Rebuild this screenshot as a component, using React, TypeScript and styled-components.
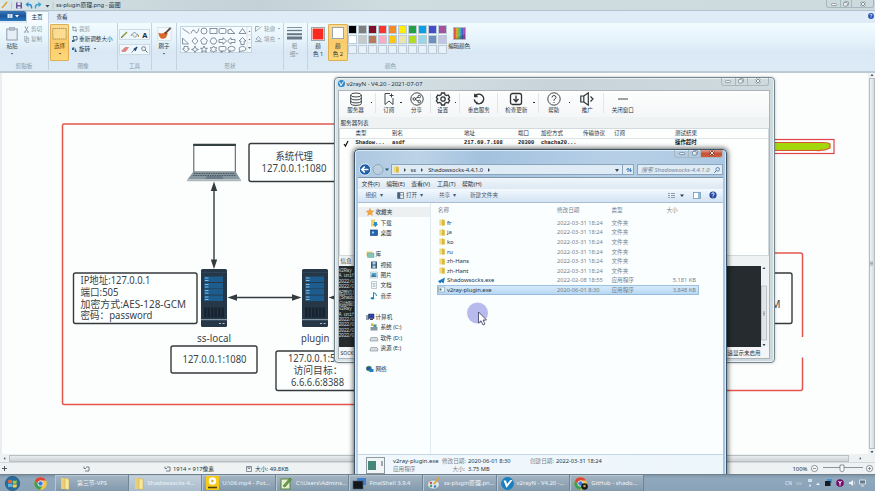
import React from "react";
import styled, { createGlobalStyle } from "styled-components";

const Global = createGlobalStyle`
  * { box-sizing: border-box; }
  html, body { margin: 0; padding: 0; overflow: hidden; }
  body { font-family: "Noto Sans", "Noto Sans CJK SC", sans-serif; font-size: 5.6px; color: #26323c; }
  svg { display: block; flex: none; overflow: visible; }
`;

const Desktop = styled.div`
  position: relative;
  width: 875px;
  height: 491px;
  overflow: hidden;
  display: flex;
  flex-direction: column;
  background: #fcfefe;
`;

const Txt = styled.span<{ $s?: number; $c?: string; $ls?: number; $b?: boolean; $i?: boolean }>`
  display: block;
  flex: none;
  white-space: pre;
  font-size: ${(p) => p.$s ?? 5.6}px;
  line-height: 8px;
  color: ${(p) => p.$c ?? "#26323c"};
  letter-spacing: ${(p) => p.$ls ?? 0}px;
  font-weight: ${(p) => (p.$b ? 700 : 400)};
  font-style: ${(p) => (p.$i ? "italic" : "normal")};
`;

const Row = styled.div<{ $gap?: number; $h?: number; $pl?: number }>`
  display: flex;
  align-items: center;
  gap: ${(p) => p.$gap ?? 0}px;
  height: ${(p) => (p.$h ? p.$h + "px" : "auto")};
  padding-left: ${(p) => p.$pl ?? 0}px;
`;

/* ---------- window caption buttons ---------- */
const CaptionBox = styled.div<{ $w: number[] }>`
  display: grid;
  grid-template-columns: ${(p) => p.$w.map((w) => w + "px").join(" ")};
  height: 8px;
  border: 1px solid #a9b8c0;
  border-top: 0;
  border-radius: 0 0 3px 3px;
  overflow: hidden;
`;
const CaptionBtn = styled.div<{ $red?: boolean }>`
  display: flex;
  align-items: center;
  justify-content: center;
  border-left: 1px solid #a9b8c0;
  background: ${(p) => (p.$red ? "linear-gradient(#e0a193, #c7513a 50%, #cf5c3c)" : "transparent")};
  &:first-child { border-left: 0; }
`;
function Caption({ w, red }: { w: number[]; red?: boolean }) {
  const s = red ? "#5d7385" : "#75838b";
  return (
    <CaptionBox $w={w}>
      <CaptionBtn>
        <svg width="6" height="6" viewBox="0 0 6 6"><rect x=".5" y="2.6" width="5" height="2" rx=".8" fill="#f2f6f8" stroke={s} strokeWidth=".7" /></svg>
      </CaptionBtn>
      <CaptionBtn>
        <svg width="6" height="6" viewBox="0 0 6 6"><rect x="1.5" y=".6" width="4" height="3.6" rx=".6" fill="#eef3f5" stroke={s} strokeWidth=".7" /><rect x=".5" y="1.6" width="3.8" height="3.4" rx=".6" fill="#eef3f5" stroke={s} strokeWidth=".7" /></svg>
      </CaptionBtn>
      <CaptionBtn $red={red}>
        <svg width="6" height="6" viewBox="0 0 6 6"><path d="M1 1l4 4M5 1L1 5" stroke={red ? "#7a3a2c" : s} strokeWidth="2" /><path d="M1.2 1.2l3.6 3.6M4.8 1.2L1.2 4.8" stroke="#fff" strokeWidth=".9" /></svg>
      </CaptionBtn>
    </CaptionBox>
  );
}

/* ---------- Paint ---------- */
const PaintTitle = styled.div`
  height: 11px;
  display: flex;
  align-items: center;
  justify-content: space-between;
  background: linear-gradient(90deg, #d9e6ea 0, #cfdde1 80px, #c4d2d8 260px, #cfdce0 400px, #ccd9dd);
  border-bottom: 1px solid #b1c2ca;
`;
const CaptionSlot = styled.div`
  align-self: flex-start;
  padding-right: 1px;
`;
const TabBar = styled.div`
  height: 12px;
  display: flex;
  background: #dfebf6;
`;
const FileTab = styled.div`
  width: 25.5px;
  height: 10px;
  display: flex;
  align-items: center;
  justify-content: center;
  background: linear-gradient(#3c78b8, #1a559c 50%, #2c79be);
  border-radius: 0 2px 0 0;
`;
const Tab = styled.div<{ $on?: boolean }>`
  width: ${(p) => (p.$on ? 23 : 27)}px;
  height: 12px;
  padding-bottom: ${(p) => (p.$on ? 2 : 1)}px;
  display: flex;
  align-items: center;
  justify-content: center;
  background: ${(p) => (p.$on ? "#f6fcff" : "transparent")};
  border: ${(p) => (p.$on ? "1px solid #c4d5e4" : "0")};
  border-bottom: 0;
`;
const HelpSlot = styled.div`
  margin-left: auto;
  padding: 2px 1px;
`;
const Ribbon = styled.div`
  height: 50px;
  display: flex;
  background: linear-gradient(#f2fcff 0, #e6f3fb 35%, #d9e8f4 60%, #dcebf6);
  border-bottom: 2px solid #bccad3;
`;
const Group = styled.div<{ $w: number }>`
  width: ${(p) => p.$w}px;
  height: 47px;
  flex: none;
  display: flex;
  flex-direction: column;
  border-right: 1px solid #c3d4e0;
  &:last-child { border-right: 0; }
`;
const GroupBody = styled.div`
  height: 38.500px;
  display: flex;
  align-items: flex-start;
`;
const GroupLabel = styled.div`
  height: 8px;
  display: flex;
  justify-content: center;
`;
const BigButton = styled.div<{ $w: number; $ml?: number; $on?: boolean }>`
  width: ${(p) => p.$w}px;
  height: 37px;
  margin: 1px 0 0 ${(p) => p.$ml ?? 0}px;
  display: flex;
  flex-direction: column;
  align-items: center;
  padding-top: 2px;
  border-radius: 1px;
  border: ${(p) => (p.$on ? "1px solid #dfae51" : "1px solid transparent")};
  background: ${(p) => (p.$on ? "linear-gradient(#fadb97, #fbcb69 50%, #fed778)" : "transparent")};
`;
const BigIcon = styled.div`
  height: 15px;
  display: flex;
  align-items: flex-start;
`;
const SmallCol = styled.div<{ $ml: number }>`
  margin: 1px 0 0 ${(p) => p.$ml}px;
  display: flex;
  flex-direction: column;
`;
const ToolBoxes = styled.div`
  margin: 6px 0 0 1px;
  display: flex;
  flex-direction: column;
  gap: 4px;
`;
const ToolBox = styled.div`
  width: 31px;
  height: 11px;
  display: flex;
  align-items: center;
  justify-content: space-around;
  background: #eef7fc;
  border: 1px solid #ccdae4;
`;
const ShapeBox = styled.div`
  width: 72px;
  height: 27px;
  margin: 3px 0 0 3px;
  display: flex;
  background: #f5fbfe;
  border: 1px solid #c3d4df;
`;
const Swatch = styled.div<{ $c: string; $s: number }>`
  width: ${(p) => p.$s}px;
  height: ${(p) => p.$s}px;
  background: ${(p) => p.$c};
  border: 1px solid #9aa5ac;
  box-shadow: inset 0 0 0 0.6px #fff;
`;
const Palette = styled.div`
  margin: 1.5px 0 0 0.5px;
  display: grid;
  grid-template-columns: repeat(10, 9px);
  grid-auto-rows: 9px;
  gap: 1px;
`;
const PaletteCell = styled.div<{ $c: string }>`
  background: ${(p) => p.$c};
  border: 1px solid #bccbd6;
`;

const Clip = () => (
  <svg width="12" height="14" viewBox="0 0 12 14"><rect x=".8" y="2" width="10.4" height="11" fill="#e6edf5" stroke="#8d9cae" /><rect x="3.5" y=".6" width="5" height="2.6" fill="#b4bfca" stroke="#8d9cae" strokeWidth=".6" /></svg>
);
const MenuMark = ({ c = "#44515d" }: { c?: string }) => (
  <svg width="4" height="8" viewBox="0 0 4 8"><path d="M.8 3h2.400L2 4.600z" fill={c} /></svg>
);
function Shapes() {
  return (
    <svg width="66" height="25" viewBox="0 0 66 25" fill="none" stroke="#56697a" strokeWidth=".7">
      <path d="M1.500 1.500l7 5M10 6.500q2-6 4-2t4-3M1.500 11v6h6zM14 10.500l3 3.500-3 3.500-3-3.500zM23 10.500l3.300 2.600-1.300 4h-4l-1.300-4zM47 6.500V3l3-1 1 2 3 2.500zM58 6.500l3.500-5 3.500 5z" />
      <circle cx="23" cy="4" r="3" />
      <rect x="29" y="1.500" width="7" height="5" /><rect x="38" y="1.500" width="7" height="5" rx="1.300" />
      <path d="M31 11h3l2 3-2 3h-3l-2-3zM38 12.500h4v-1.800l3.500 3.300-3.500 3.300v-1.800h-4zM54 12.500h-4v-1.800L46.500 14l3.500 3.300v-1.800h4zM59.800 17.500V14H58l3.500-3.500L65 14h-1.800v3.500z" />
      <path d="M3 19.500h4v2.500h1.500L5 25.200 1.500 22H3zM14 19l1 2.500 2.500 1L15 23.500l-1 2-1-2-2.500-1 2.500-1zM23 19l1 2.300h2.500l-1.900 1.500.8 2.400-2.400-1.400-2.400 1.400.8-2.400-1.900-1.500H22zM32.500 19l1 1.700h2.200l-1 1.700 1 1.700h-2.200l-1 1.300-1-1.300h-2.200l1-1.700-1-1.700h2.200z" />
      <rect x="38" y="19.500" width="7" height="4.500" rx="1.200" /><path d="M40 24v1.500l2-1.500" />
      <ellipse cx="50.500" cy="21.800" rx="3.600" ry="2.400" /><path d="M48 23.500v2l2-1.500M58.500 23.500q-1.500-3 1-3.500 2-1.500 4 0 2 .5 1 3-1 1.500-4.500 1l-2 1z" />
    </svg>
  );
}
const palette = [
  "#000", "#7f7f7f", "#83102a", "#f8362e", "#f58a2a", "#fdec0a", "#22a048", "#0aa0e4", "#444cc8", "#a3509f",
  "#fff", "#c5c9ca", "#b9795a", "#fcaac6", "#fcc813", "#ece6ae", "#b4dc1e", "#96d8e8", "#6e90ba", "#c6c2e4",
  ...Array(10).fill("#e6f1f9"),
];

function PaintRibbon() {
  const g = "#8c9aa6";
  return (
    <Ribbon>
      <Group $w={49}>
        <GroupBody>
          <BigButton $w={22} $ml={1}><BigIcon><Clip /></BigIcon><Txt $c="#44515d">粘贴</Txt><MenuMark /></BigButton>
          <SmallCol $ml={1}>
            <Row $gap={2} $h={10}><svg width="5" height="7" viewBox="0 0 5 7"><path d="M1 .5l2.600 5M4 .5L1.500 5.500" stroke={g} /><circle cx="1" cy="6" r=".8" fill="none" stroke={g} strokeWidth=".6" /><circle cx="4" cy="6" r=".8" fill="none" stroke={g} strokeWidth=".6" /></svg><Txt $c={g}>剪切</Txt></Row>
            <Row $gap={2} $h={10}><svg width="5" height="7" viewBox="0 0 5 7" fill="#edf3f7" stroke={g} strokeWidth=".6"><path d="M.5.500h2.500v4.500h-2.500zM2 2h2.700v4.500h-2.700z" /></svg><Txt $c={g}>复制</Txt></Row>
          </SmallCol>
        </GroupBody>
        <GroupLabel><Txt $c={g}>剪贴板</Txt></GroupLabel>
      </Group>
      <Group $w={69}>
        <GroupBody>
          <BigButton $w={19} $ml={1} $on>
            <BigIcon><svg width="15" height="14" viewBox="0 0 15 14"><rect x=".8" y="1.500" width="13.400" height="10.500" fill="#fbdc93" stroke="#a9863f" strokeWidth=".8" strokeDasharray="1.500 .5" /></svg></BigIcon>
            <Txt $c="#6c531c">选择</Txt><MenuMark />
          </BigButton>
          <SmallCol $ml={2.500}>
            <Row $gap={2.500} $h={10}><svg width="5" height="6" viewBox="0 0 5 6"><path d="M1 0v4.500h4M0 1.500h4V6" stroke={g} fill="none" strokeWidth=".8" /></svg><Txt $c={g}>裁剪</Txt></Row>
            <Row $gap={2.500} $h={10}><svg width="5" height="6" viewBox="0 0 5 6"><path d="M1 .5h4v3.500H2z" fill="#e9f6ff" stroke="#33526f" strokeWidth=".8" /><path d="M0 4h2.500v2H0z" fill="#3e6388" /></svg><Txt>重新调整大小</Txt></Row>
            <Row $gap={2.500} $h={10}><svg width="5" height="6" viewBox="0 0 5 6"><path d="M0 2L2 1v3H0zM2.700 1L5 6H2.700z" fill="#346795" /></svg><Txt>旋转</Txt><MenuMark /></Row>
          </SmallCol>
        </GroupBody>
        <GroupLabel><Txt $c={g}>图像</Txt></GroupLabel>
      </Group>
      <Group $w={34}>
        <GroupBody>
          <ToolBoxes>
            <ToolBox>
              <svg width="7" height="7" viewBox="0 0 7 7"><path d="M.7 6.300L6 1" stroke="#8f9f47" strokeWidth="1.600" /><path d="M.3 6.700l1-1" stroke="#333" /></svg>
              <svg width="8" height="7" viewBox="0 0 8 7"><path d="M3.500 1L6.500 4 4 6.500 1 3.500z" fill="#e9f0f5" stroke="#597994" strokeWidth=".7" /><path d="M1 3l-1 2M6 3q2 .5 1.500 3" stroke="#ce8749" fill="none" /></svg>
              <Txt $s={7.500} $b>A</Txt>
            </ToolBox>
            <ToolBox>
              <svg width="8" height="7" viewBox="0 0 8 7"><path d="M.5 5L4 1.500h3.500L4.500 5.500H1z" fill="#ea8480" stroke="#bb6663" strokeWidth=".5" /></svg>
              <svg width="7" height="7" viewBox="0 0 7 7"><path d="M.5 6.500l3-3" stroke="#889" /><path d="M3 2.500L5 4.500M4 3.500l2-2.500" stroke="#274d7d" strokeWidth="1.800" /></svg>
              <svg width="7" height="7" viewBox="0 0 7 7"><circle cx="2.700" cy="2.700" r="2" fill="#edf7fb" stroke="#596a78" strokeWidth=".8" /><path d="M4.300 4.300l2.200 2.200" stroke="#596a78" /></svg>
            </ToolBox>
          </ToolBoxes>
        </GroupBody>
        <GroupLabel><Txt $c={g}>工具</Txt></GroupLabel>
      </Group>
      <Group $w={25}>
        <GroupBody>
          <BigButton $w={24}>
            <BigIcon><svg width="15" height="15" viewBox="0 0 15 16"><rect x=".5" y=".5" width="14" height="14" fill="#f5fafc" stroke="#c6d0d6" strokeWidth=".6" /><path d="M1 6q1 9 8 5.500L11 7 8 5q-2 3-7 1z" fill="#d9692f" /><path d="M8 7l6-6" stroke="#544a44" strokeWidth="2" /></svg></BigIcon>
            <Txt>刷子</Txt><MenuMark />
          </BigButton>
        </GroupBody>
      </Group>
      <Group $w={107}>
        <GroupBody>
          <ShapeBox>
            <Shapes />
            <svg width="5" height="25" viewBox="0 0 5 25"><path d="M0 0v25M0 8h5M0 16h5" stroke="#c9d6df" strokeWidth=".6" /><path d="M1.500 5l1-1.200 1 1.200zM1.500 12l1 1.200 1-1.200zM1 20h3l-1.500 2z" fill="#56697a" /></svg>
          </ShapeBox>
          <SmallCol $ml={3}>
            <Row $gap={2} $h={10}><svg width="7" height="6" viewBox="0 0 7 6"><path d="M4 .5H.5v5L6.500.5" stroke={g} fill="none" strokeWidth=".8" /></svg><Txt $c={g}>轮廓</Txt><MenuMark c={g} /></Row>
            <Row $gap={2} $h={10}><svg width="7" height="6" viewBox="0 0 7 6"><path d="M1 3l2.500-2.500L6 3.500l-2 1.500zM0 5.600h7" stroke={g} fill="none" strokeWidth=".8" /></svg><Txt $c={g}>填充</Txt><MenuMark c={g} /></Row>
          </SmallCol>
        </GroupBody>
        <GroupLabel><Txt $c={g}>形状</Txt></GroupLabel>
      </Group>
      <Group $w={24}>
        <GroupBody>
          <BigButton $w={21}>
            <BigIcon><svg width="15" height="14" viewBox="0 0 15 14" stroke="#677784"><path d="M0 .5h15" strokeWidth=".8" /><path d="M0 3.500h15" strokeWidth="1.300" /><path d="M0 7.200h15" strokeWidth="2" /><path d="M0 11h15" strokeWidth="3" /></svg></BigIcon>
            <Txt $c={g}>粗</Txt><Row><Txt $c={g}>细</Txt><MenuMark c={g} /></Row>
          </BigButton>
        </GroupBody>
      </Group>
      <Group $w={165}>
        <GroupBody>
          <BigButton $w={20}><BigIcon><Swatch $c="#fb2a20" $s={14} /></BigIcon><Txt>颜</Txt><Txt>色 1</Txt></BigButton>
          <BigButton $w={19.500} $on><BigIcon><Swatch $c="#fff" $s={12} /></BigIcon><Txt>颜</Txt><Txt>色 2</Txt></BigButton>
          <Palette>{palette.map((c, i) => <PaletteCell key={i} $c={c} />)}</Palette>
          <BigButton $w={24}>
            <BigIcon><svg width="13" height="13" viewBox="0 0 13 13"><rect width="13" height="13" fill="#b1b9bd" />{["#d6574d", "#dda332", "#79bd4e", "#44a2bd", "#4c59c6", "#ad4cb2"].map((c, i) => <rect key={c} x={1 + i * 1.850} y="1" width="1.900" height="11" fill={c} />)}<path d="M1 12h11V7z" fill="#0003" /></svg></BigIcon>
            <Txt $ls={-0.200}>编辑颜色</Txt>
          </BigButton>
        </GroupBody>
        <GroupLabel><Txt $c={g}>颜色</Txt></GroupLabel>
      </Group>
    </Ribbon>
  );
}

const CanvasArea = styled.div`
  height: 381px;
  display: flex;
  overflow: hidden;
  border-left: 2px solid #e8eef1;
`;
const VScroll = styled.div`
  width: 7px;
  flex: none;
  display: flex;
  flex-direction: column;
  align-items: center;
  justify-content: space-between;
  background: #eef2f4;
`;
const VThumb = styled.div`
  width: 6px;
  flex: 1;
  margin: 1px 0;
  border: 1px solid #b3bcc1;
  background: linear-gradient(90deg, #f0f3f4, #d5dbde);
  display: flex;
  align-items: center;
  justify-content: center;
`;
const HScroll = styled.div`
  height: 8px;
  display: flex;
  align-items: center;
  padding: 0 13px 0 3px;
  gap: 3px;
  background: #eef1f2;
`;
const HThumb = styled.div`
  flex: 1;
  height: 7px;
  margin-right: 7px;
  border: 1px solid #babfc2;
  background: linear-gradient(#e9eced, #cfd4d6);
`;
const PaintStatus = styled.div`
  height: 12px;
  display: grid;
  grid-template-columns: 83px 81px 82px 1fr auto;
  align-items: center;
  padding-right: 2px;
  background: #eef2f3;
  border-top: 1px solid #d2d9dc;
`;
const Arrow = ({ d, w = 4 }: { d: string; w?: number }) => (
  <svg width={w} height={w} viewBox="0 0 4 4"><path d={d} fill="#3f4a52" /></svg>
);
const UP = "M2 1l1.500 2h-3z";
const DOWN = "M2 3.200L.5 1h3z";

function Server({ x }: { x: number }) {
  return (
    <g transform={`translate(${x} 269)`}>
      <rect width="26" height="58" rx="1.500" fill="#263847" />
      <rect y="50" width="26" height="1.200" fill="#8796a3" />
      <rect y="3" width="26" height=".8" fill="#31495d" />
      {[0, 6.500, 12.600, 19].map((y) => (
        <g key={y} transform={`translate(0 ${y})`}>
          <rect x="3" y="7.500" width="19" height="5.500" fill="#1d5c8e" />
          <path d="M4 9h3.500M4 11.500h3.500" stroke="#9cc6e2" strokeWidth=".9" />
        </g>
      ))}
      <path d="M3 38.500h20v10H3z" fill="#17232f" />
      <path d="M6 38.500v10M9.500 38.500v10M13 38.500v10M16.500 38.500v10M20 38.500v10" stroke="#2b4154" strokeWidth=".7" />
      <path d="M18 54.500h2M21.500 54.500h2" stroke="#b6c2ca" strokeWidth="1" />
    </g>
  );
}

const DiagramText = styled.text.attrs({ lengthAdjust: "spacingAndGlyphs" })`
  font-family: "Noto Sans", "Noto Sans CJK SC", sans-serif;
  font-size: 10.2px;
  fill: #3b4246;
  white-space: pre;
`;
function Diagram() {
  const arrow = "#333b3d";
  return (
    <svg width="866" height="381" viewBox="2 73 866 381">
      <g fill="none" stroke="#e2564e" strokeWidth="1.500">
        <path d="M400 124H64q-1.500 0-1.500 1.500V403q0 1.500 1.500 1.500H400" />
        <path d="M700 253h100.500q2 0 2 2v82M802.500 357.500V388.500q0 2-2 2H700" />
        <rect x="700" y="139.500" width="134" height="14" stroke="#e0434c" strokeWidth="1.200" />
      </g>
      <path d="M700 142.500H822q8 0 8 1.500v4q-6 3-14 2.500H700z" fill="#a4d60e" stroke="#dc5331" strokeWidth="1.200" />
      <g fill="#fdffff" stroke="#343a3c" strokeWidth="1.400">
        <rect x="249" y="143.500" width="130" height="38" rx="2" />
        <rect x="73.500" y="273" width="123.500" height="50.500" rx="2" />
        <rect x="171" y="346" width="86" height="27" rx="2" />
        <rect x="276" y="351" width="120" height="39.500" rx="2" />
        <rect x="680" y="273" width="112" height="50.500" rx="2" />
      </g>
      <DiagramText x="275.500" y="160.200" textLength="37.500">系统代理</DiagramText>
      <DiagramText x="261.500" y="171.800" textLength="65">127.0.0.1:1080</DiagramText>
      <DiagramText x="80.500" y="283.500" textLength="70">IP地址:127.0.0.1</DiagramText>
      <DiagramText x="80.500" y="295.500" textLength="38">端口:505</DiagramText>
      <DiagramText x="80.500" y="307.500" textLength="105.500">加密方式:AES-128-GCM</DiagramText>
      <DiagramText x="80.500" y="319.200" textLength="72">密码：password</DiagramText>
      <DiagramText x="197" y="342" textLength="34">ss-local</DiagramText>
      <DiagramText x="301" y="342" textLength="28.500">plugin</DiagramText>
      <DiagramText x="182.500" y="362.500" textLength="64">127.0.0.1:1080</DiagramText>
      <DiagramText x="288" y="362" textLength="58">127.0.0.1:505</DiagramText>
      <DiagramText x="293.500" y="373.700" textLength="49">访问目标：</DiagramText>
      <DiagramText x="291" y="386.200" textLength="53">6.6.6.6:8388</DiagramText>
      <DiagramText x="780.500" y="307.500" textAnchor="end">AES-128-GCM</DiagramText>
      <rect x="193.800" y="144.500" width="41.500" height="27.500" fill="#fdffff" stroke="#4b5757" strokeWidth="1" />
      <path d="M193.300 144.800h42.500" stroke="#33403f" strokeWidth="2.200" />
      <path d="M193 172h43l4.500 7.500h-53z" fill="#8797a0" />
      <path d="M194 173.500h41M193 175.500h43" stroke="#4a5763" strokeWidth="1.100" strokeDasharray="1.600 .8" />
      <path d="M207 176h15l1.500 3h-18z" fill="#6c7988" /><path d="M187 179.500h54v1.700h-54z" fill="#acb8ba" />
      <path d="M214 188v74M236 297.500h58M334 297.500h30" stroke={arrow} strokeWidth="1.400" />
      <path d="M214 181.500l3.200 9.500h-6.400zM214 269l3.200-9.500h-6.400zM227.500 297.500l9.500-3.200v6.400zM301.500 297.500l-9.500-3.200v6.400zM328.500 297.500l9.500-3.200v6.400z" fill={arrow} />
      <Server x={201} /><Server x={302} />
    </svg>
  );
}

/* ---------- Windows ---------- */
const V2Window = styled.div`
  position: absolute;
  left: 333.500px;
  top: 76.500px;
  width: 441px;
  height: 286.500px;
  padding: 0 4px 3px 3px;
  border: 1px solid #75848b;
  border-radius: 4px;
  background: linear-gradient(90deg, #d9e4e8, #c8d4da 50%, #cfdadf);
  box-shadow: inset 0 0 0 1px #edf3f5, 0 0 3px #0004;
  display: flex;
  flex-direction: column;
`;
const V2Title = styled.div`
  height: 12px;
  flex: none;
  display: flex;
  align-items: center;
  justify-content: space-between;
`;
const V2Body = styled.div`
  flex: 1;
  display: flex;
  flex-direction: column;
  background: #eff2f3;
  border: 1px solid #aab4b9;
`;
const V2Toolbar = styled.div`
  height: 26.500px;
  flex: none;
  display: flex;
  padding-left: 2px;
  background: linear-gradient(#fdfefe, #f4f6f7);
`;
const V2Tool = styled.div<{ $w: number }>`
  width: ${(p) => p.$w}px;
  flex: none;
  padding-top: 1px;
  display: flex;
  flex-direction: column;
  align-items: center;
`;
const V2Gap = styled.div<{ $w: number; $sep?: boolean }>`
  width: ${(p) => p.$w}px;
  flex: none;
  height: 22px;
  margin-top: 1px;
  display: flex;
  align-items: center;
  justify-content: center;
  &::before {
    content: "";
    width: ${(p) => (p.$sep ? 1 : 1.500)}px;
    height: ${(p) => (p.$sep ? 20 : 1.500)}px;
    background: ${(p) => (p.$sep ? "#e2e6e8" : "#333")};
  }
`;
const GroupTitle = styled.div<{ $h: number }>`
  height: ${(p) => p.$h}px;
  flex: none;
  padding-left: 2px;
  display: flex;
  align-items: center;
`;
const V2Grid = styled.div`
  flex: 1;
  background: #fdfefe;
  border: 1px solid #d3dadd;
`;
const V2GridRow = styled.div<{ $head?: boolean }>`
  height: ${(p) => (p.$head ? 9.500 : 9)}px;
  display: grid;
  grid-template-columns: 16px 36.500px 72px 54px 23px 42px 31px 61px 1fr;
  align-items: center;
  border-bottom: ${(p) => (p.$head ? "1px solid #dfe4e7" : "0")};
`;
const LogPane = styled.div`
  height: 81px;
  flex: none;
  display: flex;
  padding-right: 1px;
`;
const LogText = styled.div`
  flex: 1;
  padding-top: 3px;
  background: #252b2e;
  overflow: hidden;
`;
const LogLine = styled.div`
  height: 5.450px;
  font: 5px/5.450px "Liberation Mono", "Noto Sans CJK SC", monospace;
  letter-spacing: -0.400px;
  white-space: pre;
  color: #c6ccce;
`;
const V2Status = styled.div`
  height: 11px;
  flex: none;
  display: flex;
  align-items: center;
  justify-content: space-between;
  padding: 0 8px 0 2px;
  background: #f3f5f6;
`;
const Mono = styled(Txt)`
  font-family: "Liberation Mono", "Noto Sans CJK SC", monospace;
`;

const ico: Record<string, React.ReactNode> = {
  db: <><ellipse cx="7" cy="3" rx="5.300" ry="2" /><path d="M1.700 3v8.500c0 2.500 10.600 2.500 10.600 0V3M1.700 6c0 2.500 10.600 2.500 10.600 0M1.700 9c0 2.500 10.600 2.500 10.600 0" /></>,
  mark: <path d="M8 1.500H3v11l4-3.500 4 3.500V6M9.500 1.500v4M7.500 3.500h4" />,
  share: <><circle cx="7" cy="7" r="6.200" /><circle cx="4.300" cy="7" r="1.300" /><circle cx="9.300" cy="4.500" r="1.300" /><circle cx="9.300" cy="9.600" r="1.300" /><path d="M5.500 6.500l2.600-1.300M5.500 7.600l2.600 1.400" /></>,
  gear: <><path strokeWidth="1.300" d="M5.500 1h3l.5 1.800 1.500.8 1.700-.6 1.400 2.500L12.300 7l1.300 1.500-1.400 2.500-1.700-.6-1.500.8-.5 1.800h-3L5 11.200l-1.500-.8-1.700.6L.4 8.500 1.700 7 .4 5.500 1.800 3l1.700.6L5 2.800z" /><circle cx="7" cy="7" r="2.200" strokeWidth="1.300" /></>,
  restart: <path strokeWidth="1.500" d="M3.300 4A4.700 4.700 0 1 1 4.200 10.800M2.300 7.500a4.700 4.700 0 0 0 2.500 3.700M2.800 1.700V4.500H5.600M4.800 12.300V9.800" />,
  update: <><rect x="1.500" y="1.500" width="11" height="11" rx="2" strokeWidth="1.300" /><path strokeWidth="1.300" d="M7 3.500v6M4.500 7L7 9.700 9.500 7" /></>,
  help: <><circle cx="7" cy="7" r="6.200" /><path d="M5 5.500Q5 3.500 7 3.500t2 2Q9 6.700 7 7.600v1.200M7 10v1" /></>,
  horn: <path strokeWidth="1.200" d="M.8 4h3v6h-3zM3.800 4L8.300.8v12.400L3.800 10M10.500 4.500l2.500 2.500-2.500 2.500" />,
  line: <path d="M2 7h10" />,
};
const V2Icon = ({ n }: { n: string }) => (
  <svg width="14" height="14" viewBox="0 0 14 14" fill="none" stroke="#2e3335" strokeWidth=".9">{ico[n]}</svg>
);
type Piece = [number, string?, string?];
const tools: Piece[] = [
  [30, "db", "服务器"], [2], [6, "|"], [20.400, "mark", "订阅"], [4], [27.400, "share", "分享"], [1, "|"],
  [23.200, "gear", "设置"], [2], [7, "|"], [30.400, "restart", "重启服务"], [8, "|"], [28.600, "update", "检查更新"],
  [7], [3, "|"], [26.800, "help", "帮助"], [4], [32.200, "horn", "推广"], [1, "|"], [36.800, "line", "关闭窗口"],
];
const logs = ["V2Ray 4", "A unifi", "2022/04", "2022/04", "配置信息", "[Shadow", "启动服务", "V2Ray 4", "A unifi", "2022/04", "2022/04", "2022/04", "2022/04"];

function V2RayN() {
  return (
    <V2Window>
      <V2Title>
        <Row $gap={2}>
          <svg width="7" height="7" viewBox="0 0 7 7"><circle cx="3.500" cy="3.500" r="3.500" fill="#2b87c8" /><path d="M1.500 1.800L3 5.500l2.500-4" stroke="#fff" fill="none" /></svg>
          <Txt $s={6.100} $ls={-0.080}>v2rayN - V4.20 - 2021-07-07</Txt>
        </Row>
        <CaptionSlot><Caption w={[13, 12, 21]} /></CaptionSlot>
      </V2Title>
      <V2Body>
        <V2Toolbar>
          {tools.map(([w, n, label], i) => label
            ? <V2Tool key={i} $w={w}><V2Icon n={n!} /><Txt $s={5.500}>{label}</Txt></V2Tool>
            : <V2Gap key={i} $w={w} $sep={n === "|"} />)}
        </V2Toolbar>
        <GroupTitle $h={11}><Txt>服务器列表</Txt></GroupTitle>
        <V2Grid>
          <V2GridRow $head>
            <i />{["类型", "别名", "地址", "端口", "加密方式", "传输协议", "订阅", "测试结果"].map((t) => <Txt key={t} $s={5.500}>{t}</Txt>)}
          </V2GridRow>
          <V2GridRow>
            <svg width="10" height="7" viewBox="0 0 10 7"><path d="M4 4l1.500 2L8 1" fill="none" stroke="#111" strokeWidth="1.200" /></svg>
            {["Shadow...", "asdf", "217.69.7.108", "20300", "chacha20...", "", "", "操作超时"].map((t, i) => <Mono key={i} $s={5.400} $b $c="#111">{t}</Mono>)}
          </V2GridRow>
        </V2Grid>
        <GroupTitle $h={10}><Txt>信息</Txt></GroupTitle>
        <LogPane>
          <LogText>{logs.map((l, i) => <LogLine key={i}>{l}</LogLine>)}</LogText>
          <VScroll>
            <Arrow d={UP} />
            <svg width="6" height="72" viewBox="0 0 6 72"><rect x=".5" y="15" width="5" height="54" fill="#e1e5e7" stroke="#aeb7bc" strokeWidth=".7" /><path d="M2 41h2M2 42.500h2M2 44h2" stroke="#667" strokeWidth=".6" /></svg>
            <Arrow d={DOWN} />
          </VScroll>
        </LogPane>
        <V2Status><Txt $s={5}>SOCKS5:10808</Txt><Txt $s={5.500}>网速显示未启用</Txt></V2Status>
      </V2Body>
    </V2Window>
  );
}

const Explorer = styled.div`
  position: absolute;
  left: 353.500px;
  top: 148.500px;
  width: 373.500px;
  height: 340px;
  padding: 0 3px;
  border: 1px solid #3c5468;
  border-radius: 4px 4px 0 0;
  background: linear-gradient(100deg, #abc7e0 0, #bdd3e7 15%, #a3c1de 30%, #b7d0e7 60%, #a6c4df);
  box-shadow: inset 0 0 0 1px #dcebf6, 0 0 5px 1px #0009;
  display: flex;
  flex-direction: column;
`;
const ExTitle = styled.div`
  height: 14px;
  display: flex;
  justify-content: flex-end;
`;
const AddressRow = styled.div`
  height: 13px;
  display: flex;
  align-items: center;
`;
const AddressBox = styled.div<{ $w: number; $ml: number; $pl?: number }>`
  width: ${(p) => p.$w}px;
  height: 11px;
  margin-left: ${(p) => p.$ml}px;
  padding: 0 3px 0 ${(p) => p.$pl ?? 3}px;
  display: flex;
  align-items: center;
  gap: 4px;
  border: 1px solid #8ba6bc;
  background: #dfebf5;
`;
const Push = styled.div`
  margin-left: auto;
`;
const MenuBar = styled.div`
  height: 11.500px;
  margin-top: 1px;
  display: grid;
  grid-template-columns: 24.700px 25px 25.700px 25px 1fr;
  align-items: center;
  padding-left: 4px;
  background: linear-gradient(#f0f6fb, #dde8f3);
  border-top: 1px solid #7f97ab;
`;
const CommandBar = styled.div`
  height: 14px;
  display: grid;
  grid-template-columns: 31.500px 42px 31px 1fr auto;
  align-items: center;
  padding: 0 6px 0 8px;
  background: linear-gradient(#f4fafe, #e2eef9 50%, #d4e3f3);
  border-bottom: 1px solid #a9bfd3;
`;
const ExMain = styled.div`
  height: 251px;
  display: flex;
  background: #fbfeff;
`;
const NavPane = styled.div`
  width: 73px;
  flex: none;
  padding-top: 4px;
  border-right: 1px solid #e0ebf2;
  display: flex;
  flex-direction: column;
`;
const NavItem = styled.div<{ $child?: boolean; $on?: boolean }>`
  height: 10.470px;
  display: flex;
  align-items: center;
  gap: ${(p) => (p.$child ? 2.500 : 2)}px;
  padding-left: ${(p) => (p.$child ? 12.500 : 8)}px;
  background: ${(p) => (p.$on ? "#edf0f1" : "transparent")};
`;
const FileList = styled.div`
  flex: 1;
  padding-left: 6px;
`;
const FileRow = styled.div<{ $head?: boolean; $on?: boolean }>`
  height: ${(p) => (p.$head ? 15 : 9.600)}px;
  width: 262px;
  display: grid;
  grid-template-columns: 8.500px 110.500px 54.500px 48px 36.500px;
  align-items: center;
  padding-left: 1.500px;
  border-radius: 1px;
  background: ${(p) => (p.$on ? "linear-gradient(#d9ecfb, #b5d6f3)" : "transparent")};
  box-shadow: ${(p) => (p.$on ? "inset 0 0 0 .8px #8ab4d8" : "none")};
`;
const Right = styled.div`
  display: flex;
  justify-content: flex-end;
`;
const Details = styled.div`
  height: 34px;
  display: flex;
  gap: 8.500px;
  padding: 2.500px 0 0 8px;
  background: linear-gradient(90deg, #f0f8fd, #edf6fb);
  border-top: 1px solid #c6d6e1;
`;
const DetailGrid = styled.div`
  display: grid;
  grid-template-columns: 49px 26px 62px 26px auto;
  grid-auto-rows: 8.300px;
  align-content: start;
`;

const Folder = () => (
  <svg width="6" height="7" viewBox="0 0 6 7"><path d="M.3.500H5.700V6.500H.3z" fill="#f1dc7c" /><path d="M3 .5v6h2.700v-5z" fill="#d9b84a" /></svg>
);
const navIco: Record<string, React.ReactNode> = {
  star: <path d="M4 .3l1.100 2.500 2.700.3-2 1.800.6 2.700L4 6.200 1.600 7.600l.6-2.700-2-1.800 2.700-.3z" fill="#f3a73c" stroke="#ce7f2a" strokeWidth=".3" />,
  down: <><path d="M1 .5h4v7H1z" fill="#edd26d" /><path d="M4 3h3v2h1L5.500 8 3 5h1z" fill="#2c8bd0" /></>,
  desk: <><rect x=".5" y="1" width="7" height="5.500" fill="#2365b5" stroke="#14365f" strokeWidth=".6" /><path d="M2 2.500h2v2H2z" fill="#9fd0f5" /></>,
  lib: <><path d="M.5 1.500h6V6h-6z" fill="#ead279" /><path d="M1.500 3h6.500v4.500H1.500z" fill="#84c4b4" stroke="#50988d" strokeWidth=".4" /></>,
  film: <><path d="M1 .5h6v7H1z" fill="#3f586f" /><path d="M2.500 1h3v2.500h-3zM2.500 4.500h3V7h-3z" fill="#a9d2ee" /></>,
  pic: <><path d="M.5 1h7v6h-7z" fill="#edf6fb" stroke="#91a4b2" strokeWidth=".5" /><path d="M1.500 2h5v4h-5z" fill="#52a4d2" /><path d="M1.500 4.500l2-1 3 2.500h-5z" fill="#3b7893" /></>,
  doc: <><path d="M1.500.5h5v7h-5z" fill="#f8fbfd" stroke="#8296a5" strokeWidth=".5" /><path d="M2.500 2.500h3M2.500 4h3M2.500 5.500h3" stroke="#6f8ba1" strokeWidth=".5" /></>,
  note: <><path d="M3.500 6V.5Q6.500 1 6.500 4" fill="none" stroke="#2185c2" /><ellipse cx="2.500" cy="6.200" rx="1.700" ry="1.300" fill="#2185c2" /></>,
  pc: <><path d="M0 2h3v5H0z" fill="#93a2ae" /><path d="M2.500 1H8v4.500H2.500z" fill="#2c46a5" stroke="#222f57" strokeWidth=".5" /><path d="M4 6.500h3" stroke="#445" /></>,
  sys: <><path d="M.5 4h7v3.500h-7z" fill="#87959e" /><path d="M1 .5h2.500v2.500H1z" fill="#d6b13c" /><path d="M3.500 1.500h3v2.500h-3z" fill="#3c9b90" /></>,
  disk: <path d="M1 3.500h6l.8 1.500v2H.2V5z" fill="#d5dbdf" stroke="#7f8a91" strokeWidth=".6" />,
  net: <><circle cx="3" cy="3.500" r="2.800" fill="#3d9a61" /><path d="M.5 2h4v3h-4z" fill="#2d4faf" /><path d="M3.500 4h4v3h-4z" fill="#1e7cc7" /></>,
};
const nav: ([string, string, boolean] | null)[] = [
  ["star", "收藏夹", false], ["down", "下载", true], ["desk", "桌面", true], null,
  ["lib", "库", false], ["film", "视频", true], ["pic", "图片", true], ["doc", "文档", true], ["note", "音乐", true], null,
  ["pc", "计算机", false], ["sys", "系统 (C:)", true], ["disk", "软件 (D:)", true], ["disk", "资源 (E:)", true], null,
  ["net", "网络", false],
];
const files = [
  ...["fr", "ja", "ko", "ru", "zh-Hans", "zh-Hant"].map((n) => [n, "2022-03-31 18:24", "文件夹", ""]),
  ["Shadowsocks.exe", "2022-02-08 18:55", "应用程序", "5,181 KB"],
  ["v2ray-plugin.exe", "2020-06-01 8:30", "应用程序", "3,848 KB"],
];

function ExplorerWindow() {
  const gr = "#76838f";
  const cm = "#465a72";
  return (
    <Explorer>
      <ExTitle><Caption red w={[13, 12, 22]} /></ExTitle>
      <AddressRow>
        <svg width="34" height="13" viewBox="0 0 34 13">
          <circle cx="7" cy="6.500" r="5.700" fill="#1c5da8" stroke="#e4f0f8" /><path d="M10.500 6.500H4M6.800 3.500l-3 3 3 3" stroke="#fff" strokeWidth="1.700" fill="none" />
          <circle cx="20" cy="6.500" r="5" fill="#bdd0df" stroke="#7e9ab1" strokeWidth=".7" /><path d="M27 5.500h4l-2 2.500z" fill="#285273" />
        </svg>
        <AddressBox $w={232} $ml={-1} $pl={1}>
          <Folder /><Arrow d="M1 0l2 2-2 2z" /><Txt $s={5.900}>ss</Txt><Arrow d="M1 0l2 2-2 2z" /><Txt $s={5.900} $ls={-0.120}>Shadowsocks-4.4.1.0</Txt><Arrow d="M1 0l2 2-2 2z" />
          <Push><Arrow d="M0 1h4L2 4z" /></Push>
        </AddressBox>
        <AddressBox $w={12} $ml={-1}><svg width="6" height="6" viewBox="0 0 6 6"><path d="M2 5V1.500M.5 3L2 1.200 3.500 3M4.500 1v3.500M3.200 3.200l1.300 1.600 1.300-1.600" stroke="#2b6aa5" strokeWidth=".8" fill="none" /></svg></AddressBox>
        <AddressBox $w={86} $ml={3.500}>
          <Txt $s={6} $i $c="#78899a">搜索 Shadowsocks-4.4.1.0</Txt>
          <Push><svg width="6" height="6" viewBox="0 0 6 6"><circle cx="3.700" cy="2.300" r="1.800" fill="none" stroke="#41719d" strokeWidth=".8" /><path d="M2.300 3.700L.3 5.700" stroke="#41719d" /></svg></Push>
        </AddressBox>
      </AddressRow>
      <MenuBar>{["文件(F)", "编辑(E)", "查看(V)", "工具(T)", "帮助(H)"].map((t) => <Txt key={t} $s={5.900}>{t}</Txt>)}</MenuBar>
      <CommandBar>
        <Txt $c={cm}>组织  ▾</Txt>
        <Row $gap={2}><svg width="7" height="7" viewBox="0 0 7 7"><path d="M.5.500h6v6h-6z" fill="#edf4f8" stroke="#4b6378" strokeWidth=".7" /><path d="M1 1h2v5H1zM3 3h3" fill="#4b6378" stroke="#4b6378" strokeWidth=".6" /></svg><Txt $c={cm}>打开  ▾</Txt></Row>
        <Txt $c={cm}>共享  ▾</Txt>
        <Txt $c={cm}>新建文件夹</Txt>
        <Row $gap={8}>
          <svg width="17" height="7" viewBox="0 0 17 7"><path d="M0 1.500h2M3 1.500h4M0 3.500h2M3 3.500h4M0 5.500h2M3 5.500h4" stroke="#8e9eab" /><path d="M12 2.500h4L14 5z" fill="#283a4c" /></svg>
          <svg width="8" height="7" viewBox="0 0 8 7"><rect x=".5" y=".5" width="7" height="6" fill="#fff" stroke="#7197b4" strokeWidth=".8" /><path d="M5 1h2v5H5z" fill="#8fbedb" /></svg>
          <svg width="8" height="8" viewBox="0 0 8 8"><circle cx="4" cy="4" r="3.600" fill="#2546a0" /><path d="M2.800 3.200q0-1.400 1.200-1.400t1.200 1.200Q5.200 4 4 4.300v.8M4 5.600v.8" stroke="#fff" strokeWidth=".9" fill="none" /></svg>
        </Row>
      </CommandBar>
      <ExMain>
        <NavPane>
          {nav.map((n, i) => (
            <NavItem key={i} $child={n?.[2]} $on={i === 0}>
              {n && <><svg width="8" height="8" viewBox="0 0 8 8">{navIco[n[0]]}</svg><Txt>{n[1]}</Txt></>}
            </NavItem>
          ))}
        </NavPane>
        <FileList>
          <FileRow $head><Txt $c={gr}>名称</Txt><i /><Txt $c={gr}>修改日期</Txt><Txt $c={gr}>类型</Txt><Row $pl={7}><Txt $c={gr}>大小</Txt></Row></FileRow>
          {files.map((f, i) => (
            <FileRow key={f[0]} $on={i === 7}>
              {i < 6 ? <Row $pl={1}><Folder /></Row> : i === 6
                ? <svg width="7" height="7" viewBox="0 0 7 7"><path d="M0 4l7-3.500L5.500 6.500 3.500 5 2 6.500z" fill="#1f7bbf" /></svg>
                : <svg width="7" height="7" viewBox="0 0 7 7"><path d="M.5 1h6v5h-6z" fill="#f4f8fa" stroke="#7e93a5" strokeWidth=".6" /><path d="M1.500 2.500h2v2h-2z" fill="#387d73" /></svg>}
              <Row $pl={0.500}><Txt $s={5.900} $ls={-0.060}>{f[0]}</Txt></Row>
              <Txt $s={5.700} $c={gr}>{f[1]}</Txt>
              <Txt $c={gr}>{f[2]}</Txt>
              <Right><Txt $s={5.700} $c={gr}>{f[3]}</Txt></Right>
            </FileRow>
          ))}
        </FileList>
      </ExMain>
      <Details>
        <svg width="19" height="17" viewBox="0 0 19 17"><rect x=".5" y=".5" width="18" height="16" fill="#f1f5f6" stroke="#8c999f" /><rect x="2" y="4" width="8" height="9" fill="#46877c" /><path d="M16 4v5" stroke="#4c5a62" /></svg>
        <DetailGrid>
          <Txt $s={5.900}>v2ray-plugin.exe</Txt><Txt $c={gr}>修改日期:</Txt><Txt $s={5.700}>2020-06-01 8:30</Txt><Txt $c={gr}>创建日期:</Txt><Txt $s={5.700}>2022-03-31 18:24</Txt>
          <Txt $c={gr}>应用程序</Txt><Right><Txt $c={gr}>大小:  </Txt></Right><Txt $s={5.700}>3.75 MB</Txt>
        </DetailGrid>
      </Details>
    </Explorer>
  );
}

/* ---------- Taskbar ---------- */
const Taskbar = styled.div`
  position: relative;
  height: 17px;
  flex: none;
  display: flex;
  background: linear-gradient(#7f95a7, #8fa8bc 20%, #8ba3b8);
  border-top: 1px solid #71818e;
`;
const Launch = styled.div<{ $w: number }>`
  width: ${(p) => p.$w}px;
  display: flex;
  align-items: center;
  justify-content: center;
`;
const TaskBtn = styled.div<{ $light?: boolean }>`
  width: 73.600px;
  padding-left: 4px;
  display: flex;
  align-items: center;
  gap: 3px;
  overflow: hidden;
  border: 1px solid #6f8598;
  border-width: 0 1px 0 0;
  box-shadow: inset 1px 1px 0 #b8c7d3;
  background: ${(p) => (p.$light ? "linear-gradient(#c4d1dc, #a9bccb)" : "linear-gradient(#a5b5c2, #8299ad)")};
`;
const Tray = styled.div`
  margin-left: auto;
  width: 90px;
  display: flex;
  align-items: center;
  gap: 4.500px;
`;
const Chrome = () => (
  <svg width="13" height="13" viewBox="0 0 13 13"><circle cx="6.500" cy="6.500" r="6.300" fill="#f5c63a" /><path d="M1 3.400A6.300 6.300 0 0 1 12 3.400L6.500 3.600 4 8z" fill="#dd473b" /><path d="M1 3.400A6.300 6.300 0 0 0 6 12.800L9 8 4 8z" fill="#3f9f55" /><circle cx="6.500" cy="6.500" r="2.900" fill="#f5f8fa" /><circle cx="6.500" cy="6.500" r="2.200" fill="#3b78dc" /></svg>
);
const TaskFolder = () => <svg width="12" height="13" viewBox="0 0 12 13"><path d="M2 1h7v11H2z" fill="#ead075" /><path d="M6 1l4 1.500v10L6 12z" fill="#f7e7a4" stroke="#c5a544" strokeWidth=".5" /></svg>;
const tasks: [React.ReactNode, string, boolean?][] = [
  [<TaskFolder />, "  第三节-VPS"],
  [<TaskFolder />, "Shadowsocks-4...", true],
  [<svg width="13" height="14" viewBox="0 0 13 14"><rect width="13" height="14" rx="1" fill="#f7ca15" /><circle cx="6.500" cy="5" r="3.700" fill="#fff" /><path d="M5.500 3.300l2.500 1.700-2.500 1.700z" fill="#c79e15" /><path d="M2 11.500h9" stroke="#4e4316" strokeWidth="1.600" /></svg>, "U:\\06.mp4 - Pot..."],
  [<svg width="13" height="13" viewBox="0 0 13 13"><rect x="1" y="2" width="9" height="10" fill="#e6efcd" stroke="#578841" /><path d="M3 9l7-8 1.500 1.500L5 10z" fill="#63a445" stroke="#37532b" strokeWidth=".5" /></svg>, "C:\\Users\\Admins..."],
  [<svg width="13" height="13" viewBox="0 0 13 13"><rect x="4" y="1" width="9" height="7" fill="#407ed1" /><rect x="0" y="4" width="10" height="8" fill="#11171d" stroke="#4e5c68" strokeWidth=".6" /></svg>, "FinalShell 3.9.4"],
  [<svg width="14" height="13" viewBox="0 0 14 13"><ellipse cx="6.500" cy="7.500" rx="6" ry="4.500" fill="#d6e4eb" stroke="#718a98" strokeWidth=".6" /><circle cx="4" cy="6" r="1.200" fill="#cf5043" /><circle cx="4" cy="9" r="1.200" fill="#4ca157" /><circle cx="8" cy="9.500" r="1.200" fill="#4078c4" /><path d="M7 7l5-6.500" stroke="#e2a235" strokeWidth="1.700" /></svg>, "ss-plugin原理.pn..."],
  [<svg width="13" height="13" viewBox="0 0 13 13"><circle cx="6.500" cy="6.500" r="6.400" fill="#197fbd" /><path d="M2.500 3.500h2.500l1 3.500 3.500-4h2L5.500 11z" fill="#fff" /></svg>, "v2rayN - V4.20 -..."],
  [<svg width="14" height="13" viewBox="0 0 14 13"><Chrome /><circle cx="10.500" cy="9.500" r="3.300" fill="#15191c" /><circle cx="10.500" cy="9" r="1.300" fill="#c9a24c" /></svg>, "GitHub - shado..."],
];

const Pointer = styled.div`
  position: absolute;
  left: 467px;
  top: 302px;
`;

export default function App() {
  return (
    <Desktop>
      <Global />
      <PaintTitle>
        <Row $gap={5} $pl={1}>
          <svg width="50" height="9" viewBox="0 0 50 9">
            <path d="M0 2h4v6H0z" fill="#dfe9ee" /><path d="M1 7l5-6" stroke="#d9a23c" strokeWidth="1.500" /><path d="M10.500 1v7M52 1v7" stroke="#a9b7bf" strokeWidth=".6" />
            <path d="M15 1.500h6v6h-6z" fill="#62559c" /><path d="M16.500 1.500h3v2.500h-3zM16.500 5.500h3v2h-3z" fill="#e6e6f1" />
            <path d="M25.500 3.500h2.500q3 0 2.500 4" fill="none" stroke="#2f8fd3" strokeWidth="1.500" /><path d="M24.500 3.500l3-2.700v5.400z" fill="#2f8fd3" />
            <path d="M39.500 3.500H37q-3 0-2.500 4" fill="none" stroke="#3aa3cf" strokeWidth="1.500" /><path d="M40.500 3.500l-3-2.700v5.400z" fill="#3aa3cf" />
            <path d="M44.500 4h4l-2 2.500z" fill="#39454e" />
          </svg>
          <Txt $s={5.900} $ls={-0.080}>ss-plugin原理.png - 画图</Txt>
        </Row>
        <CaptionSlot><Caption w={[13, 11, 22]} /></CaptionSlot>
      </PaintTitle>
      <TabBar>
        <FileTab><svg width="12" height="6" viewBox="0 0 12 6"><path d="M.5 1h5v4h-5z" fill="#dcebf7" /><path d="M3 1v4" stroke="#3c78b8" strokeWidth=".6" /><path d="M8 2h4L10 4.500z" fill="#fff" /></svg></FileTab>
        <Tab $on><Txt>主页</Txt></Tab>
        <Tab><Txt>查看</Txt></Tab>
        <HelpSlot><svg width="6" height="6" viewBox="0 0 6 6"><circle cx="3" cy="3" r="2.900" fill="#2a4fb4" /><path d="M2 2.300q0-1 1-1t1 .8q0 .7-1 1v.5M3 4.200v.6" stroke="#fff" strokeWidth=".7" fill="none" /></svg></HelpSlot>
      </TabBar>
      <PaintRibbon />
      <CanvasArea>
        <Diagram />
        <VScroll><Arrow d={UP} /><VThumb><svg width="3" height="5" viewBox="0 0 3 5"><path d="M0 1h3M0 2.500h3M0 4h3" stroke="#6b757c" strokeWidth=".6" /></svg></VThumb><Arrow d={DOWN} /></VScroll>
      </CanvasArea>
      <HScroll><Arrow w={3} d="M3 0v4L1 2z" /><HThumb /><Arrow w={3} d="M1 0v4l2-2z" /></HScroll>
      <PaintStatus>
        <svg width="9" height="7" viewBox="0 0 9 7"><path d="M4.500 1v5M2 3.500h5" stroke="#3e4a52" strokeWidth=".9" /></svg>
        <svg width="7" height="6" viewBox="0 0 7 6"><path d="M1 .5v2h2M3 1h3v4H2" stroke="#59656d" fill="none" strokeWidth=".8" /></svg>
        <Row $gap={2}><svg width="7" height="6" viewBox="0 0 7 6"><path d="M1 .5v2h2M3 1h3v4H2" stroke="#59656d" fill="none" strokeWidth=".8" /></svg><Txt $s={5.800}>1914 × 917像素</Txt></Row>
        <Row $gap={3}><svg width="6" height="6" viewBox="0 0 6 6"><path d="M.5.500h5v5h-5zM2 .5v2h2v-2" stroke="#59656d" fill="none" strokeWidth=".7" /></svg><Txt $s={5.800}>大小: 49.8KB</Txt></Row>
        <Row $gap={3.500}>
          <Txt $s={5.900}>100%</Txt>
          <svg width="62" height="9" viewBox="0 0 62 9" stroke="#616c73" strokeWidth=".7" fill="#f7f9fa"><circle cx="3.500" cy="4.500" r="3.100" /><path d="M2 4.500h3M12 3.500h40" /><path d="M29 1h4v5.500l-2 1.500-2-1.500z" /><circle cx="58.500" cy="4.500" r="3.100" /><path d="M57 4.500h3M58.500 3v3" /></svg>
        </Row>
      </PaintStatus>
      <V2RayN />
      <ExplorerWindow />
      <Pointer>
        <svg width="22" height="24" viewBox="0 0 22 24"><circle cx="10.500" cy="11" r="10.500" fill="#9ea0e6" opacity=".72" /><path d="M11.500 10v11l2.500-2.200 2 4.200 2-1-2-4h3.500z" fill="#fff" stroke="#353a55" strokeWidth=".8" /></svg>
      </Pointer>
      <Taskbar>
        <Launch $w={25}><svg width="15" height="15" viewBox="0 0 15 15"><circle cx="7.500" cy="7.500" r="7.200" fill="#266da0" stroke="#264f70" strokeWidth=".6" /><path d="M3 4.500q2-1.200 4-.3V7.200q-2-.8-4 0z" fill="#e7623b" /><path d="M7.700 4.500q2 .8 4-.3v3q-2 1.200-4 .2z" fill="#9bcb45" /><path d="M3 8q2-.8 4 0v3q-2-.8-4 .2z" fill="#58b4e6" /><path d="M7.700 8.200q2 .8 4-.2v3q-2 1-4 .2z" fill="#f8cf43" /></svg></Launch>
        <Launch $w={30}><Chrome /></Launch>
        {tasks.map(([icon, label, light], i) => <TaskBtn key={i} $light={light}>{icon}<Txt $s={5.900} $c="#eef4f8">{label}</Txt></TaskBtn>)}
        <Tray>
          <Txt $s={5} $c="#e7eff5">CN</Txt>
          <svg width="7" height="8" viewBox="0 0 7 8"><path d="M0 3h6v3H0z" fill="#a4b5c2" /></svg>
          <svg width="4" height="8" viewBox="0 0 4 8"><path d="M0 0h4v3H0zM1 5.500h2v2H1z" fill="#cfe0ea" /></svg>
          <svg width="4" height="8" viewBox="0 0 4 8"><path d="M0 6l2-2.500L4 6z" fill="#e8f0f5" /></svg>
          <svg width="7" height="8" viewBox="0 0 7 8"><path d="M2 0h5v4H2z" fill="#4191d6" /><path d="M0 2h5.500v5H0z" fill="#161c22" /></svg>
          <svg width="8" height="8" viewBox="0 0 8 8"><circle cx="4" cy="4" r="3.800" fill="#750c6c" /><path d="M2.500 2L4 4l1.500-2M4 4v2.500" stroke="#fff" fill="none" /></svg>
          <svg width="6" height="8" viewBox="0 0 6 8"><path d="M0 3h1.500L4 1v6L1.500 5H0z" fill="#e9eff3" /><path d="M5 2.500q1.500 1.500 0 3" stroke="#e9eff3" fill="none" strokeWidth=".6" /></svg>
          <svg width="7" height="8" viewBox="0 0 7 8"><path d="M.5 1h6v4h-6zM2 7h3" fill="#697b89" stroke="#eef3f6" strokeWidth=".8" /></svg>
        </Tray>
      </Taskbar>
    </Desktop>
  );
}
